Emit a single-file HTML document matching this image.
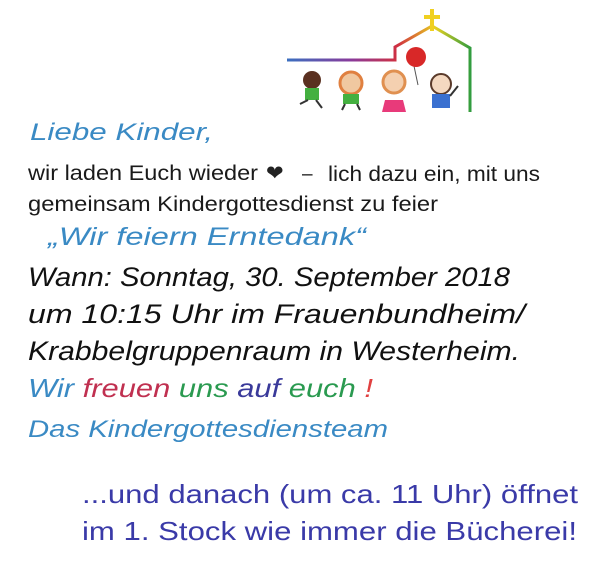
<!DOCTYPE html>
<html><head><meta charset="utf-8"><style>
html,body{margin:0;padding:0;background:#fff;width:600px;height:565px;overflow:hidden}
svg{display:block}
.s{font-family:"Liberation Sans","DejaVu Sans",sans-serif;font-style:italic}
.p{font-family:"Liberation Sans","DejaVu Sans",sans-serif}
</style></head><body>
<svg width="600" height="565" viewBox="0 0 600 565" xmlns="http://www.w3.org/2000/svg">
<defs><linearGradient id="g" x1="287" y1="0" x2="472" y2="0" gradientUnits="userSpaceOnUse">
<stop offset="0" stop-color="#3a6fc0"/><stop offset="0.35" stop-color="#8a3a9a"/><stop offset="0.6" stop-color="#d03040"/><stop offset="0.8" stop-color="#e8d020"/><stop offset="1" stop-color="#2a9a40"/></linearGradient></defs>
<polyline points="287,60 395,60 395,47 432,26 470,48 470,112" fill="none" stroke="url(#g)" stroke-width="3"/>
<rect x="430" y="9" width="4" height="22" fill="#f0d020"/><rect x="424" y="15" width="16" height="4" fill="#f0d020"/>
<line x1="414" y1="66" x2="418" y2="85" stroke="#555" stroke-width="1"/>
<ellipse cx="416" cy="57" rx="10" ry="10" fill="#d82828"/>
<g><circle cx="312" cy="80" r="9" fill="#5a3020"/><rect x="305" y="88" width="14" height="12" fill="#44b040"/><path d="M300 104 l8 -4 M316 100 l6 8" stroke="#333" stroke-width="2"/></g>
<g><circle cx="351" cy="83" r="11" fill="#f0c8a0" stroke="#e08040" stroke-width="3"/><rect x="343" y="94" width="16" height="10" fill="#44b040"/><path d="M345 104 l-3 6 M357 104 l3 6" stroke="#333" stroke-width="2"/></g>
<g><circle cx="394" cy="82" r="11" fill="#f4d0b0" stroke="#e09050" stroke-width="3"/><path d="M385 100 h18 l3 12 h-24z" fill="#e83a7a"/></g>
<g><circle cx="441" cy="84" r="10" fill="#f4d8c0" stroke="#5a3a2a" stroke-width="2"/><rect x="432" y="94" width="18" height="14" fill="#3a70d0"/><path d="M450 96 l8 -10" stroke="#333" stroke-width="2"/></g>

<text class="s" x="30" y="140" font-size="24" fill="#3a8ac4" textLength="183" lengthAdjust="spacingAndGlyphs">Liebe Kinder,</text>
<text class="p" x="28" y="180" font-size="21" fill="#1a1a1a" textLength="230" lengthAdjust="spacingAndGlyphs">wir laden Euch wieder</text>
<text class="p" x="266" y="180" font-size="21" fill="#222">❤</text>
<text class="p" x="302" y="180" font-size="19" fill="#1a1a1a">–</text>
<text class="p" x="328" y="181" font-size="21" fill="#1a1a1a" textLength="212" lengthAdjust="spacingAndGlyphs">lich dazu ein, mit uns</text>
<text class="p" x="28" y="211" font-size="21" fill="#1a1a1a" textLength="410" lengthAdjust="spacingAndGlyphs">gemeinsam  Kindergottesdienst zu feier</text>
<text class="s" x="48" y="245" font-size="25" fill="#3a8ac4" textLength="318" lengthAdjust="spacingAndGlyphs">„Wir feiern Erntedank“</text>
<text class="s" x="28" y="286" font-size="27" fill="#111" textLength="482" lengthAdjust="spacingAndGlyphs">Wann: Sonntag, 30. September 2018</text>
<text class="s" x="28" y="323" font-size="27" fill="#111" textLength="497" lengthAdjust="spacingAndGlyphs">um 10:15 Uhr im Frauenbundheim/</text>
<text class="s" x="28" y="360" font-size="27" fill="#111" textLength="492" lengthAdjust="spacingAndGlyphs">Krabbelgruppenraum in Westerheim.</text>
<text class="s" x="28" y="397" font-size="26" textLength="345" lengthAdjust="spacingAndGlyphs"><tspan fill="#3a8ac4">Wir </tspan><tspan fill="#c03050">freuen </tspan><tspan fill="#2a9a50">uns </tspan><tspan fill="#3a3a9a">auf </tspan><tspan fill="#2a9a50">euch </tspan><tspan fill="#e04040">!</tspan></text>
<text class="s" x="28" y="437" font-size="24" fill="#3a8ac4" textLength="360" lengthAdjust="spacingAndGlyphs">Das Kindergottesdiensteam</text>
<text class="p" x="82" y="503" font-size="26" fill="#3a3aa8" textLength="496" lengthAdjust="spacingAndGlyphs">...und danach (um ca. 11 Uhr) öffnet</text>
<text class="p" x="82" y="540" font-size="26" fill="#3a3aa8" textLength="495" lengthAdjust="spacingAndGlyphs">im 1. Stock wie immer die Bücherei!</text>
</svg>
</body></html>
